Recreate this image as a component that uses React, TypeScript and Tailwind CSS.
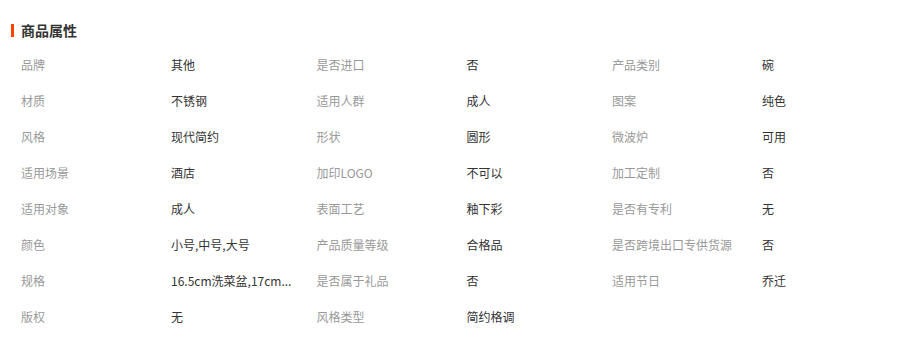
import React from "react";

const rows: [string, string][][] = [
  [["品牌", "其他"], ["是否进口", "否"], ["产品类别", "碗"]],
  [["材质", "不锈钢"], ["适用人群", "成人"], ["图案", "纯色"]],
  [["风格", "现代简约"], ["形状", "圆形"], ["微波炉", "可用"]],
  [["适用场景", "酒店"], ["加印LOGO", "不可以"], ["加工定制", "否"]],
  [["适用对象", "成人"], ["表面工艺", "釉下彩"], ["是否有专利", "无"]],
  [["颜色", "小号,中号,大号"], ["产品质量等级", "合格品"], ["是否跨境出口专供货源", "否"]],
  [["规格", "16.5cm洗菜盆,17cm..."], ["是否属于礼品", "否"], ["适用节日", "乔迁"]],
  [["版权", "无"], ["风格类型", "简约格调"]],
];

export default function App() {
  return (
    <div className="w-[912px] h-[340px] bg-white pl-[11px] pt-5 font-['Noto_Sans_CJK_SC',sans-serif]">
      <div className="flex items-center h-5">
        <span className="w-[3px] h-[13px] bg-[#ff4400]" />
        <h2 className="ml-[7px] text-[14px] font-bold text-[#333]">商品属性</h2>
      </div>
      <div className="mt-[7px] pl-[10px]">
        {rows.map((row, i) => (
          <div key={i} className="flex h-9 items-center text-[12px]">
            {row.map(([k, v], j) => (
              <div key={j} className="flex w-[295.5px] shrink-0">
                <span className="w-[150px] shrink-0 text-[#999]">{k}</span>
                <span className="w-[130px] whitespace-nowrap text-[#333]">{v}</span>
              </div>
            ))}
          </div>
        ))}
      </div>
    </div>
  );
}
